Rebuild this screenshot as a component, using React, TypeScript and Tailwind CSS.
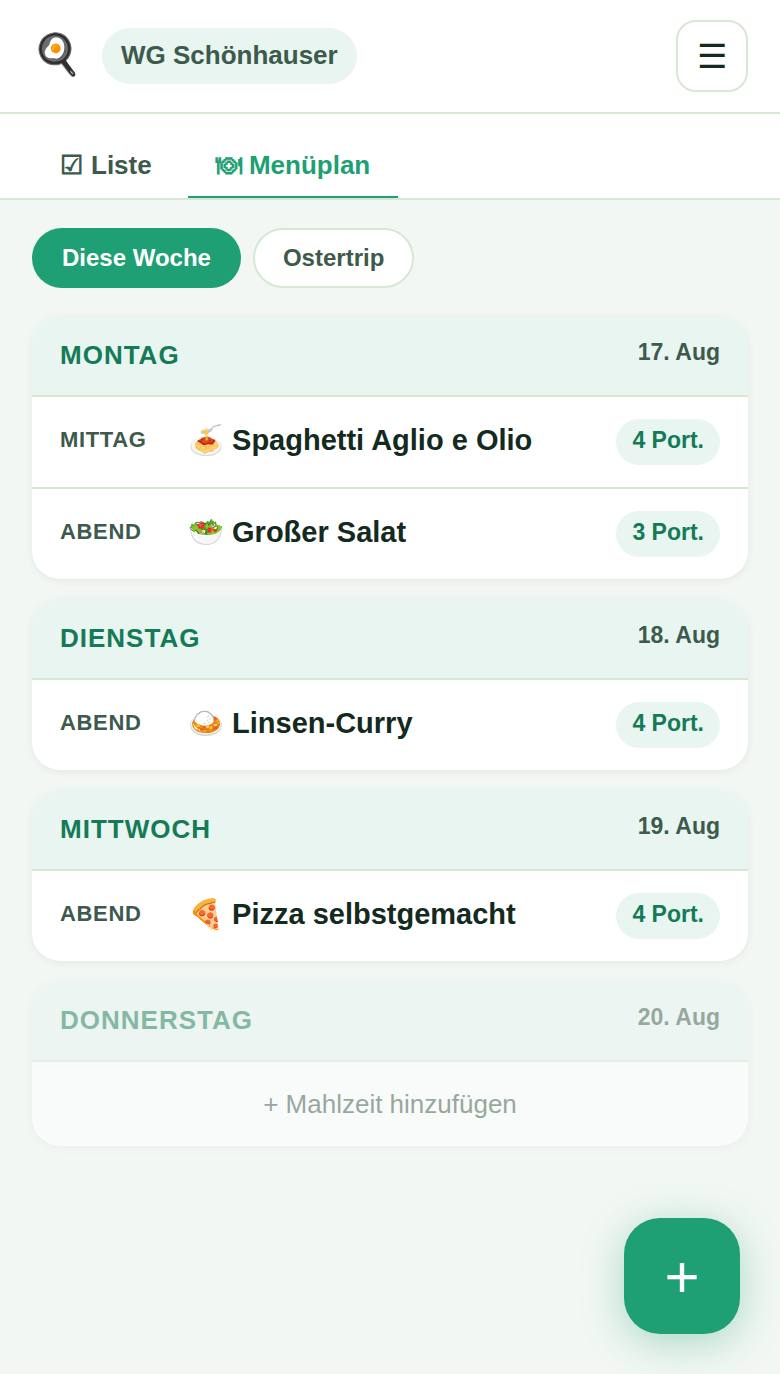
import React from "react";

type Meal = { slot: string; emoji: string; name: string; portions: number };
type Day = { name: string; date: string; meals: Meal[] };

const days: Day[] = [
  {
    name: "Montag",
    date: "17. Aug",
    meals: [
      { slot: "Mittag", emoji: "🍝", name: "Spaghetti Aglio e Olio", portions: 4 },
      { slot: "Abend", emoji: "🥗", name: "Großer Salat", portions: 3 },
    ],
  },
  { name: "Dienstag", date: "18. Aug", meals: [{ slot: "Abend", emoji: "🍛", name: "Linsen-Curry", portions: 4 }] },
  { name: "Mittwoch", date: "19. Aug", meals: [{ slot: "Abend", emoji: "🍕", name: "Pizza selbstgemacht", portions: 4 }] },
  { name: "Donnerstag", date: "20. Aug", meals: [] },
];

function MealRow({ meal }: { meal: Meal }) {
  return (
    <li className="flex items-center border-t-2 border-[#d4e8d4] px-7 py-[22px]">
      <span className="w-32 shrink-0 pb-1 text-[22px] leading-6 font-bold tracking-[0.03em] text-[#3d5a4c] uppercase">{meal.slot}</span>
      <span className="flex-1 pb-1 text-[29px] leading-[34px] font-bold text-[#132a20]">
        {meal.emoji} {meal.name}
      </span>
      <span className="rounded-full bg-[#e8f5f0] px-4 pt-2 pb-3 text-[23px] leading-[26px] font-bold text-[#157a58]">{meal.portions} Port.</span>
    </li>
  );
}

function DayCard({ day }: { day: Day }) {
  const empty = day.meals.length === 0;
  return (
    <section className={`overflow-hidden rounded-[28px] bg-white shadow-[0_2px_8px_rgba(0,0,0,0.06)] ${empty ? "opacity-50" : ""}`}>
      <header className="flex items-start justify-between bg-[#e8f5f0] px-7 pt-[23px] pb-6">
        <h2 className="text-[26px] leading-8 font-bold tracking-[1px] text-[#157a58] uppercase">{day.name}</h2>
        <time className="text-[23px] leading-[26px] font-bold text-[#3d5a4c]">{day.date}</time>
      </header>
      {empty ? (
        <button type="button" className="w-full border-t-2 border-[#d4e8d4] px-7 py-[26px] text-center text-[26px] leading-8 text-[#3d5a4c]">
          + Mahlzeit hinzufügen
        </button>
      ) : (
        <ul>
          {day.meals.map((meal) => (
            <MealRow key={meal.slot} meal={meal} />
          ))}
        </ul>
      )}
    </section>
  );
}

export default function App() {
  return (
    <div className="flex min-h-screen flex-col bg-[#f2f7f3] font-['Liberation_Sans',sans-serif] text-[#132a20]">
      <header className="flex items-center border-b-2 border-[#d4e8d4] bg-white px-8 py-5">
        <span className="w-[70px] pb-1 text-[40px] leading-[48px]">🍳</span>
        <button type="button" className="h-14 rounded-full bg-[#e8f5f0] px-[19px] pb-0.5 text-[26px] leading-8 font-bold text-[#3d5a4c]">WG Schönhauser</button>
        <button type="button" aria-label="Menü" className="ml-auto size-[72px] rounded-[20px] border-2 border-[#d4e8d4] text-[34px] leading-10">☰</button>
      </header>
      <nav className="flex gap-2 border-b-2 border-[#d4e8d4] bg-white px-8 pt-5">
        <a href="#liste" className="flex gap-2 border-b-2 border-transparent px-7 py-[15px] text-[26px] leading-8 font-bold text-[#3d5a4c]">
          <span>☑</span>
          <span>Liste</span>
        </a>
        <a href="#menueplan" aria-current="page" className="border-b-2 border-[#1f9f74] px-7 py-[15px] text-[26px] leading-8 font-bold text-[#1f9f74]">
          <span className="font-['Liberation_Sans','Unifont_Upper',sans-serif]">🍽</span> Menüplan
        </a>
      </nav>
      <main className="flex flex-col px-8 pt-7 pb-10">
        <div className="mb-7 flex gap-3">
          <button type="button" className="h-[60px] rounded-full bg-[#1f9f74] px-[30px] text-[24px] leading-7 font-bold text-white">Diese Woche</button>
          <button type="button" className="h-[60px] rounded-full border-2 border-[#d4e8d4] bg-white px-7 text-[24px] leading-7 font-bold text-[#3d5a4c]">Ostertrip</button>
        </div>
        <div className="flex flex-col gap-5">
          {days.map((day) => (
            <DayCard key={day.name} day={day} />
          ))}
        </div>
      </main>
      <button type="button" aria-label="Mahlzeit hinzufügen" className="fixed right-10 bottom-10 size-[116px] rounded-[36px] bg-[#1f9f74] pt-0.5 text-[60px] leading-[60px] text-white shadow-[0_8px_40px_rgba(31,159,116,0.35)]">+</button>
    </div>
  );
}
